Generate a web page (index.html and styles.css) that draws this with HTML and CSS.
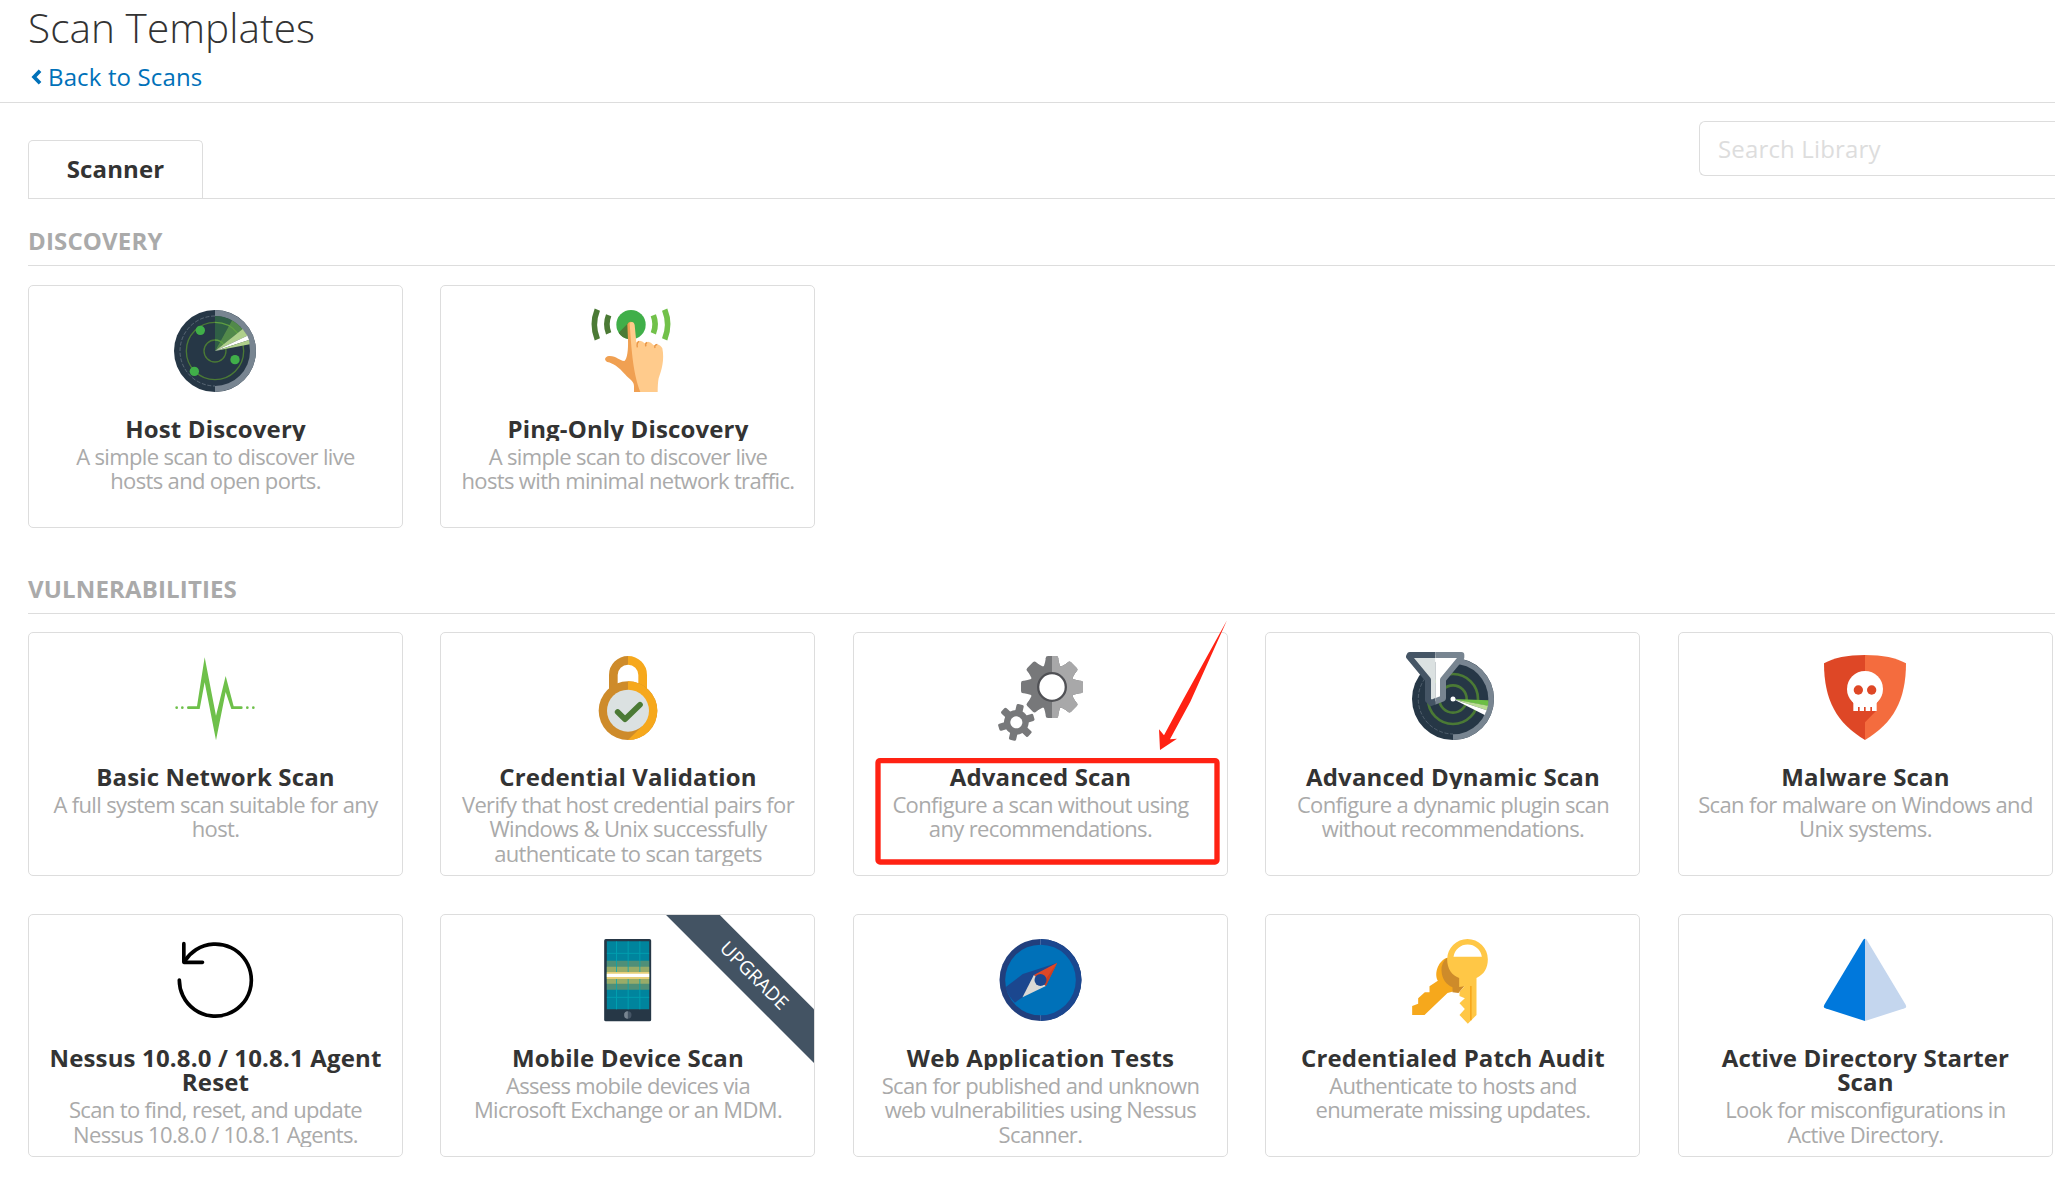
FILE: index.html
```html
<!DOCTYPE html>
<html lang="en">
<head>
<meta charset="utf-8">
<title>Scan Templates</title>
<link rel="stylesheet" href="styles.css">
</head>
<body>
<header class="page-header">
  <h1 class="page-title">Scan Templates</h1>
  <a class="back-link"><svg class="chevron" viewBox="0 0 28 39"><path d="M26 6 13 19.500 26 33" fill="none" stroke="currentColor" stroke-width="8"/></svg>Back to Scans</a>
</header>
<main class="content">
  <nav class="tabs">
    <div class="tab">Scanner</div>
    <div class="search">Search Library</div>
  </nav>

  <section class="group">
    <h2 class="group-title">DISCOVERY</h2>
    <div class="cards cards-discovery">
      <article class="card">
        <svg class="icon" viewBox="405 45 363 330">
          <circle cx="585" cy="213" r="123" fill="#263746"/>
          <path d="M585 90a123 123 0 0 1 0 246z" fill="#788591"/>
          <circle cx="585" cy="213" r="105" fill="#263746"/>
          <path d="M585 108a105 105 0 0 0 0 210" fill="none" stroke="#8a97a0" stroke-width="1.500" stroke-dasharray="12 5"/>
          <g fill="none" stroke="#4b7a35" stroke-width="4"><circle cx="585" cy="213" r="86"/><circle cx="585" cy="213" r="33"/></g>
          <path d="M585 213V108A105 105 0 0 1 636 121z" fill="#2f5f46"/>
          <path d="M585 213 636 121A105 105 0 0 1 668 148z" fill="#52894a"/>
          <path d="M585 127A86 86 0 0 1 653 160M585 180A33 33 0 0 1 611 193" fill="none" stroke="#5f9f42" stroke-width="4"/>
          <path d="M585 213 668 147 682 167z" fill="#b0d08c"/>
          <path d="M585 213 682 167 687 180z" fill="#fff"/>
          <path d="M585 213 687 180 689 193z" fill="#b0d08c"/>
          <g fill="#40af49"><circle cx="541" cy="151" r="14"/><circle cx="645" cy="239" r="14"/><circle cx="523" cy="274" r="14"/></g>
        </svg>
        <div class="text"><h3 class="name">Host Discovery</h3><p class="desc">A simple scan to discover live hosts and open ports.</p></div>
      </article>
      <article class="card">
        <svg class="icon" viewBox="411 45 363 330">
          <g fill="none" stroke="#4b7a35" stroke-width="17"><path d="M502 89Q484 134 502 178M536 106Q525 134 536 160"/></g>
          <g fill="none" stroke="#72c14a" stroke-width="17"><path d="M704 89Q722 134 704 178M670 106Q681 134 670 160"/></g>
          <circle cx="603" cy="134" r="44" fill="#40af49"/>
          <path d="M566 158 595 129V177Q576 174 566 158z" fill="#4b7a35"/>
          <path d="M612 336V318C611 302 600 300 585 283C565 260 550 250 532 246C521 240 524 230 537 228C560 227 567 242 583 243C592 238 595 208 594 180L592 133Q596 123 606 126L634 336z" fill="#f0a052"/>
          <path d="M599 128Q611 121 614 135L619 187Q631 176 644 190Q657 178 671 196Q688 188 697 205C704 240 695 270 686 295Q683 310 683 336H631C610 280 605 220 599 128z" fill="#ffcb8c"/>
          <path d="M622 202Q619 190 627 184M648 199Q644 192 651 187M675 204Q672 195 682 193" fill="none" stroke="#e99545" stroke-width="4"/>
        </svg>
        <div class="text"><h3 class="name">Ping-Only Discovery</h3><p class="desc">A simple scan to discover live hosts with minimal network traffic.</p></div>
      </article>
    </div>
  </section>

  <section class="group group-vulnerabilities">
    <h2 class="group-title">VULNERABILITIES</h2>
    <div class="cards cards-vulnerabilities">
      <article class="card">
        <svg class="icon" viewBox="405 216 363 330" fill="#6ec04a">
          <path d="M505 409H531L554 262 588 437 617 318 641 409H664a4 4 0 0 1 0 8H634L617 366 588 511 554 337 539 417H505a4 4 0 0 1 0-8z"/>
          <circle cx="470" cy="413" r="4"/><circle cx="487" cy="413" r="4"/><circle cx="682" cy="413" r="4"/><circle cx="700" cy="413" r="4"/>
        </svg>
        <div class="text"><h3 class="name">Basic Network Scan</h3><p class="desc">A full system scan suitable for any host.</p></div>
      </article>
      <article class="card">
        <svg class="icon" viewBox="411 96 363 330">
          <path d="M550 240V195A44 44 0 0 1 594 151" fill="none" stroke="#ce8b2a" stroke-width="26"/>
          <path d="M638 240V195A44 44 0 0 0 594 151" fill="none" stroke="#f6a81c" stroke-width="26"/>
          <circle cx="594" cy="302" r="88" fill="#ce8b2a"/>
          <path d="M594 214a88 88 0 0 1 0 176L636 349z" fill="#f6a81c"/>
          <path d="M594 214V302L636 349 660 302z" fill="#f6a81c"/>
          <circle cx="594" cy="302" r="63" fill="#dbe1e1"/>
          <path d="M563 306 585 328 630 284" fill="none" stroke="#4b7a35" stroke-width="17" stroke-linecap="round" stroke-linejoin="round"/>
        </svg>
        <div class="text"><h3 class="name">Credential Validation</h3><p class="desc">Verify that host credential pairs for Windows &amp; Unix successfully authenticate to scan targets</p></div>
      </article>
      <article class="card">
        <svg class="icon" viewBox="420 96 363 330">
          <defs>
            <g id="tooth-pair"><rect x="-19" y="-93" width="38" height="186" rx="7"/><path d="M-18-84-25-60H25L18-84zM-18 84-25 60H25L18 84z"/></g>
            <g id="gear"><circle r="67"/><use href="#tooth-pair"/><use href="#tooth-pair" transform="rotate(45)"/><use href="#tooth-pair" transform="rotate(90)"/><use href="#tooth-pair" transform="rotate(135)"/></g>
            <clipPath id="gear-right"><rect x="0" y="-100" width="100" height="200"/></clipPath>
          </defs>
          <g transform="translate(636 231)">
            <use href="#gear" fill="#77787a"/>
            <g clip-path="url(#gear-right)"><use href="#gear" fill="#a8a8a9"/></g>
            <circle r="41.500" fill="#fff" stroke="#505155" stroke-width="7"/>
          </g>
          <g transform="translate(529 337) rotate(13)" fill="#77787a">
            <circle r="37"/><rect x="-11" y="-55" width="22" height="110" rx="5"/><rect x="-11" y="-55" width="22" height="110" rx="5" transform="rotate(60)"/><rect x="-11" y="-55" width="22" height="110" rx="5" transform="rotate(120)"/>
            <circle r="18" fill="#fff"/>
          </g>
        </svg>
        <div class="text"><h3 class="name">Advanced Scan</h3><p class="desc">Configure a scan without using any recommendations.</p></div>
        <svg class="annotation" viewBox="39 66 1125 732">
          <rect x="114" y="452" width="1017" height="304" rx="6" fill="none" stroke="#ff2213" stroke-width="16"/>
          <path d="M1161 31 1051 275 990 388 1011 386 960 420 957 358 972 376 1030 268z" fill="#ff2213"/>
        </svg>
      </article>
      <article class="card">
        <svg class="icon" viewBox="411 96 363 330">
          <defs>
            <clipPath id="funnel-left"><rect x="440" y="110" width="101" height="200"/></clipPath>
            <clipPath id="funnel-right"><rect x="541" y="110" width="100" height="200"/></clipPath>
          </defs>
          <circle cx="594" cy="267" r="123" fill="#263746"/>
          <path d="M594 144a123 123 0 0 1 0 246z" fill="#788591"/>
          <circle cx="594" cy="267" r="106" fill="#263746"/>
          <path d="M510 205A105 105 0 0 0 594 372" fill="none" stroke="#788591" stroke-width="1.500" stroke-dasharray="12 5"/>
          <g fill="none" stroke="#4b7a35" stroke-width="8"><circle cx="594" cy="267" r="75"/><circle cx="594" cy="267" r="41"/></g>
          <path d="M594 267 700 271 699 288z" fill="#6cbe45"/>
          <path d="M594 267 699 287 695 301z" fill="#b9dc93"/>
          <path d="M594 267 695 301 689 315z" fill="#fff"/>
          <circle cx="594" cy="267" r="7.500" fill="#fff"/>
          <g stroke-width="18" stroke-linejoin="round">
            <path clip-path="url(#funnel-left)" d="M464 135H619V142L564 209V265L528 279 519 270V209L462 140z" fill="#dbe1e1" stroke="#455565"/>
            <path clip-path="url(#funnel-right)" d="M464 135H619V142L564 209V265L528 279 519 270V209L462 140z" fill="#fff" stroke="#788591"/>
          </g>
        </svg>
        <div class="text"><h3 class="name">Advanced Dynamic Scan</h3><p class="desc">Configure a dynamic plugin scan without recommendations.</p></div>
      </article>
      <article class="card">
        <svg class="icon" viewBox="450 96 363 330">
          <path d="M630 135Q550 135 507 160C507 270 545 340 630 390z" fill="#de4726"/>
          <path d="M630 135Q710 135 753 160C753 270 715 340 630 390z" fill="#f46c3e"/>
          <path d="M630 303H663L630 337z" fill="#de4726"/>
          <circle cx="630" cy="237" r="54" fill="#fff"/><path d="M590 268 595 280V303H665V280L670 268z" fill="#fff"/>
          <g fill="#de4726"><circle cx="610" cy="240" r="14"/><circle cx="650" cy="240" r="14"/><path d="M609 291h5v12h-5zM627 291h5v12h-5zM646 291h5v12h-5z"/></g>
        </svg>
        <div class="text"><h3 class="name">Malware Scan</h3><p class="desc">Scan for malware on Windows and Unix systems.</p></div>
      </article>

      <article class="card">
        <svg class="icon" viewBox="-1.500 0 363 330" fill="none" stroke="#000" stroke-width="11" stroke-linecap="round" stroke-linejoin="round">
          <path d="M71.500 168A108 108 0 1 0 88 111"/><path d="M85 59V115H141"/>
        </svg>
        <div class="text"><h3 class="name">Nessus 10.8.0 / 10.8.1 Agent Reset</h3><p class="desc">Scan to find, reset, and update Nessus 10.8.0 / 10.8.1 Agents.</p></div>
      </article>
      <article class="card card-upgrade">
        <svg class="icon" viewBox="-1.500 0 363 330">
          <rect x="110" y="45" width="141" height="247" rx="5" fill="#263746"/>
          <path d="M118 52h127v204H118z" fill="#00849d"/>
          <path d="M118 110h127v87H118z" fill="#4f8f78"/>
          <path d="M118 128h127v51H118z" fill="#98ab68"/>
          <path d="M147 52V256M182 52V256M217 52V256M118 88H245M118 220H245" stroke="#00a8b5" stroke-width="3" opacity=".75"/>
          <path d="M118 144h127v21H118z" fill="#e6cf78"/>
          <path d="M118 149h127v10H118z" fill="#fff"/>
          <circle cx="181" cy="273" r="11" fill="#455565"/><path d="M181 262a11 11 0 0 0 0 22z" fill="#788591"/>
        </svg>
        <div class="text"><h3 class="name">Mobile Device Scan</h3><p class="desc">Assess mobile devices via Microsoft Exchange or an MDM.</p></div>
        <div class="ribbon">UPGRADE</div>
      </article>
      <article class="card">
        <svg class="icon" viewBox="-1.500 0 363 330">
          <circle cx="180" cy="168" r="123" fill="#213f7d"/><path d="M180 45a123 123 0 0 1 0 246z" fill="#1b478f"/>
          <path d="M180 45V291" stroke="#6f8cba" stroke-width="1.500"/>
          <circle cx="180" cy="168" r="106" fill="#0071b9"/>
          <path d="M229 117 127 150 75 190A106 106 0 0 0 103 236L126 220z" fill="#1b478f"/>
          <path d="M230 116 160 153 196 186z" fill="#de4726"/><path d="M126 220 160 153 196 186z" fill="#dbd9d5"/>
          <path d="M230 116 196 186 188 177z" fill="#c93f22"/>
          <circle cx="180" cy="168" r="18" fill="#1b478f"/>
        </svg>
        <div class="text"><h3 class="name">Web Application Tests</h3><p class="desc">Scan for published and unknown web vulnerabilities using Nessus Scanner.</p></div>
      </article>
      <article class="card">
        <svg class="icon" viewBox="-1.500 0 363 330">
          <path d="M164 101C140 108 123 145 136 170L111 187V205H97L77 223V239L59 246V273H96L165 207 190 200V120z" fill="#f6a81c"/>
          <path d="M164 101Q146 114 147 140C148 165 162 182 180 190V205L198 207 216 186V150z" fill="#ce8b2a"/>
          <path fill-rule="evenodd" d="M225 45A61 61 0 0 0 164 106C164 135 178 154 200 162V189L216 187 201 203V216L217 223 201 238 217 255 201 273 226 299 252 273V162C274 152 286 133 286 106A61 61 0 0 0 225 45zM183 98A43 43 0 0 1 268 98z" fill="#ffc746"/>
          <path d="M235 186V289" stroke="#f6a81c" stroke-width="5"/>
        </svg>
        <div class="text"><h3 class="name">Credentialed Patch Audit</h3><p class="desc">Authenticate to hosts and enumerate missing updates.</p></div>
      </article>
      <article class="card">
        <svg class="icon" viewBox="450 72 363 330">
          <path d="M630 116Q627 116 625 119L508 314Q504 322 511 325L630 363z" fill="#0078dc"/>
          <path d="M630 116Q633 116 635 119L752 314Q756 322 749 325L630 363z" fill="#c4d6ee"/>
        </svg>
        <div class="text"><h3 class="name">Active Directory Starter Scan</h3><p class="desc">Look for misconfigurations in Active Directory.</p></div>
      </article>
    </div>
  </section>
</main>
</body>
</html>
```
FILE: styles.css
```css
* { box-sizing: border-box; }

body {
  margin: 0;
  background: #fff;
  color: #333;
  font-family: "Open Sans", "Noto Sans", sans-serif;
  font-size: 24px;
  overflow: hidden;
}

h1, h2, h3, p { margin: 0; }

.page-header {
  height: 103px;
  padding-left: 28px;
  border-bottom: 1px solid #ddd;
}

.page-title {
  height: 60px;
  font-size: 40.5px;
  font-weight: 300;
  line-height: 56px;
  letter-spacing: 0.08px;
}

.back-link {
  display: flex;
  align-items: center;
  gap: 7px;
  color: #0071b9;
  line-height: 33px;
  letter-spacing: 0.14px;
}

.chevron { width: 13px; height: 18px; overflow: visible; }

.content { padding-left: 28px; }

.tabs {
  display: flex;
  justify-content: space-between;
  align-items: flex-end;
  height: 96px;
  border-bottom: 1px solid #ddd;
}

.tab {
  width: 175px;
  height: 58px;
  padding-top: 11px;
  border: 1px solid #ddd;
  border-bottom: 0;
  border-radius: 5px 5px 0 0;
  font-weight: 700;
  line-height: 33px;
  letter-spacing: 0.15px;
  text-align: center;
}

.search {
  width: 356px;
  height: 55px;
  margin-bottom: 22px;
  padding: 10px 18px;
  border: 1px solid #ddd;
  border-right: 0;
  border-radius: 6px 0 0 6px;
  color: #ddd;
  line-height: 33px;
  letter-spacing: 0.15px;
}

.group-title {
  height: 67px;
  padding-top: 25px;
  border-bottom: 1px solid #ddd;
  color: #aaa;
  font-size: 24px;
  font-weight: 700;
  line-height: 33px;
  letter-spacing: 0.15px;
}

.group-vulnerabilities { margin-top: 19px; }

.cards {
  display: grid;
  grid-template-columns: repeat(5, 375px);
  column-gap: 37.49px;
  row-gap: 38px;
}

.cards-discovery { grid-template-rows: 243px; padding-top: 19px; }
.cards-vulnerabilities { grid-template-rows: 244px 243px; padding-top: 18px; }

.card {
  position: relative;
  display: flex;
  flex-direction: column;
  align-items: center;
  padding: 9px 0;
  border: 1px solid #ddd;
  border-radius: 5px;
}

.icon { flex: none; width: 121px; height: 110px; }

.text {
  width: 345px;
  height: 101px;
  margin-top: auto;
  overflow: hidden;
  text-align: center;
}

.name {
  overflow: hidden;
  font-size: 24px;
  font-weight: 700;
  line-height: 24.4px;
  letter-spacing: 0.15px;
}

.desc {
  width: 335.5px;
  margin: 2.6px auto 0;
  color: #aaa;
  font-size: 22px;
  line-height: 24.4px;
  letter-spacing: -0.65px;
}

.card-upgrade { overflow: hidden; }

.ribbon {
  position: absolute;
  top: 42px;
  right: -60px;
  width: 240px;
  height: 37.6px;
  background: #435363;
  color: #fff;
  font-size: 19px;
  line-height: 37.6px;
  text-align: center;
  transform: rotate(45deg);
}

.annotation {
  position: absolute;
  top: -1px;
  left: -1px;
  width: 375px;
  height: 244px;
  overflow: visible;
}
```
